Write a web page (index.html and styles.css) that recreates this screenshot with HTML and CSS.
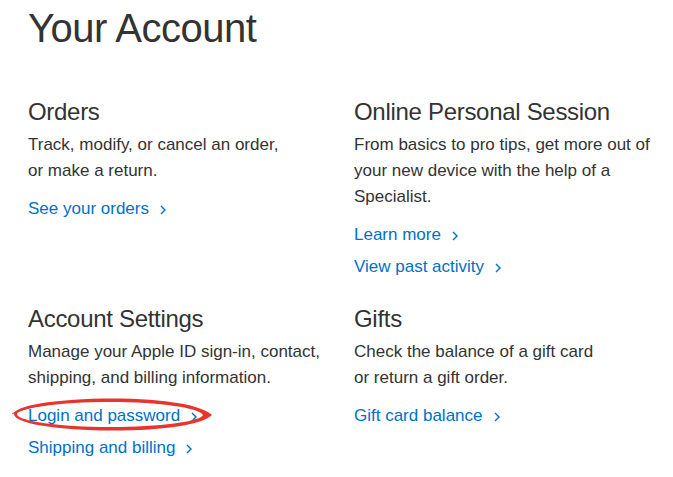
FILE: index.html
```html
<!DOCTYPE html>
<html lang="en">
<head>
<meta charset="utf-8">
<title>Your Account</title>
<link rel="stylesheet" href="styles.css">
</head>
<body>
<main class="page">
  <h1 class="title">Your Account</h1>
  <div class="grid">
    <section class="card">
      <h2 class="card-title">Orders</h2>
      <p class="card-text">Track, modify, or cancel an order,<br>or make a return.</p>
      <ul class="links">
        <li><a class="link" href="#">See your orders<svg class="chev" viewBox="0 0 6 10" width="6" height="10"><path d="M1 1l4 4-4 4"/></svg></a></li>
      </ul>
    </section>
    <section class="card">
      <h2 class="card-title">Online Personal Session</h2>
      <p class="card-text">From basics to pro tips, get more out of<br>your new device with the help of a<br>Specialist.</p>
      <ul class="links">
        <li><a class="link" href="#">Learn more<svg class="chev" viewBox="0 0 6 10" width="6" height="10"><path d="M1 1l4 4-4 4"/></svg></a></li>
        <li><a class="link" href="#">View past activity<svg class="chev" viewBox="0 0 6 10" width="6" height="10"><path d="M1 1l4 4-4 4"/></svg></a></li>
      </ul>
    </section>
    <section class="card">
      <h2 class="card-title">Account Settings</h2>
      <p class="card-text">Manage your Apple ID sign-in, contact,<br>shipping, and billing information.</p>
      <ul class="links">
        <li class="marked"><a class="link" href="#">Login and password<svg class="chev" viewBox="0 0 6 10" width="6" height="10"><path d="M1 1l4 4-4 4"/></svg></a>
          <svg class="circle" viewBox="0 0 204 34" width="204" height="34" aria-hidden="true">
            <path fill-rule="evenodd" d="M2 16 C2 7.5 46 0.5 100 0.5 C155 0.5 190 7.5 200 17 C190 26.5 155 32.5 100 32.5 C46 32.5 2 25.5 2 16 Z M5 16.2 C5 10 48 4 98 4 C148 4 188 10 191 17 C188 23.5 148 29 98 29 C48 29 5 23 5 16.2 Z"/>
            <path class="tail" d="M0.8 15.5 C8 12 22 8.5 40 6"/>
          </svg>
        </li>
        <li><a class="link" href="#">Shipping and billing<svg class="chev" viewBox="0 0 6 10" width="6" height="10"><path d="M1 1l4 4-4 4"/></svg></a></li>
      </ul>
    </section>
    <section class="card">
      <h2 class="card-title">Gifts</h2>
      <p class="card-text">Check the balance of a gift card<br>or return a gift order.</p>
      <ul class="links">
        <li><a class="link" href="#">Gift card balance<svg class="chev" viewBox="0 0 6 10" width="6" height="10"><path d="M1 1l4 4-4 4"/></svg></a></li>
      </ul>
    </section>
  </div>
</main>
</body>
</html>
```
FILE: styles.css
```css
html, body {
  margin: 0;
  padding: 0;
  background: #ffffff;
}

body {
  font-family: "Liberation Sans", Arial, sans-serif;
  color: #333333;
}

.page {
  padding: 4px 0 0 28px;
}

.title {
  margin: 0;
  font-size: 40px;
  line-height: 48px;
  font-weight: 400;
  letter-spacing: -0.5px;
  color: #333333;
}

.grid {
  margin-top: 46px;
  display: grid;
  grid-template-columns: 326px 1fr;
  row-gap: 25px;
}

.card-title {
  margin: 0;
  font-size: 24px;
  line-height: 28px;
  font-weight: 400;
  letter-spacing: -0.3px;
  color: #333333;
}

.card-text {
  margin: 6px 0 0;
  font-size: 17px;
  line-height: 26px;
  color: #333333;
}

.links {
  list-style: none;
  margin: 12px 0 0;
  padding: 0;
  display: flex;
  flex-direction: column;
  gap: 6px;
}

.links li {
  font-size: 17px;
  line-height: 26px;
}

.link {
  color: #0070c9;
  text-decoration: none;
}

.chev {
  margin-left: 11px;
  vertical-align: -1px;
  fill: none;
  stroke: #0070c9;
  stroke-width: 1.4;
}

.marked {
  position: relative;
}

.circle {
  position: absolute;
  left: -16px;
  top: -5px;
  fill: #e5352c;
  pointer-events: none;
}

.circle .tail {
  fill: none;
  stroke: #e5352c;
  stroke-width: 1.2;
  stroke-linecap: round;
}
```
